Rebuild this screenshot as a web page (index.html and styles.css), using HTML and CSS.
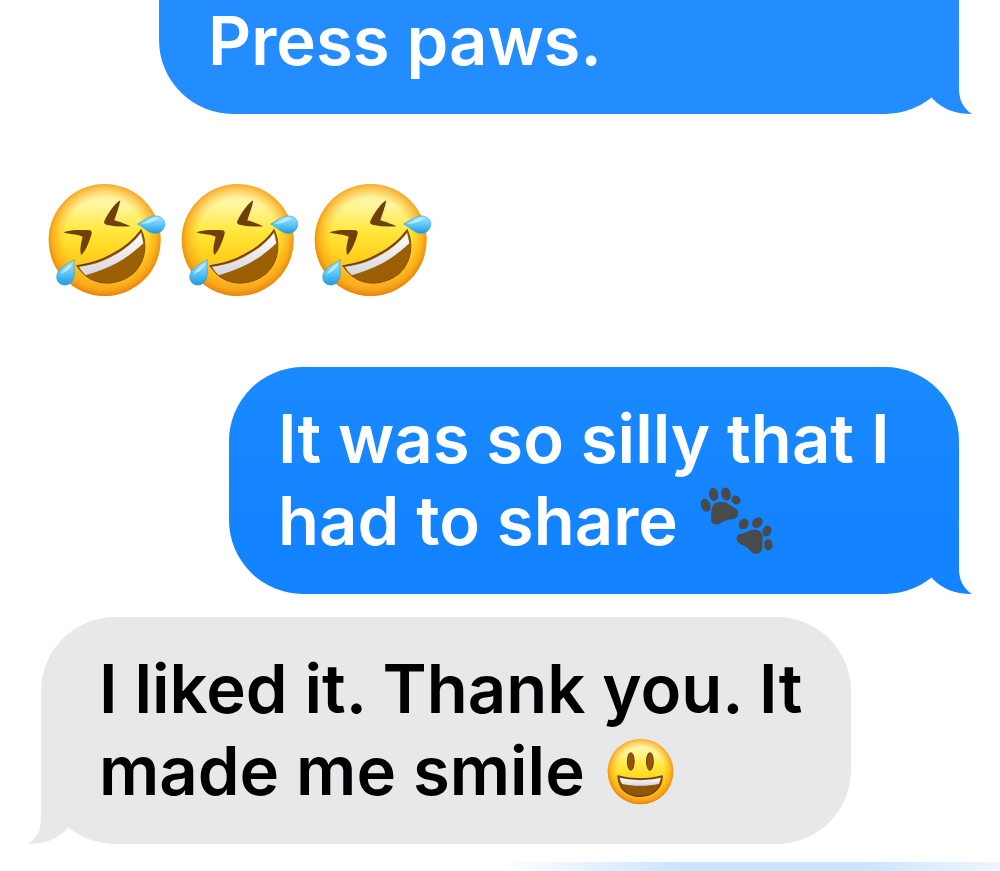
FILE: index.html
```html
<!DOCTYPE html>
<html lang="en">
<head>
  <meta charset="UTF-8">
  <meta name="viewport" content="width=device-width, initial-scale=1.0">
  <title>Messages</title>
  <link rel="stylesheet" href="styles.css">
</head>
<body>
  <!-- Shared drawings -->
  <svg class="defs" width="0" height="0" aria-hidden="true">
    <defs>
      <radialGradient id="face-edge" cx="0.5" cy="0.48" r="0.52">
        <stop offset="0.68" stop-color="#fbb01a" stop-opacity="0"/>
        <stop offset="0.88" stop-color="#f8a318" stop-opacity="0.7"/>
        <stop offset="1" stop-color="#e5820c"/>
      </radialGradient>
      <linearGradient id="face-fill" x1="0" y1="0" x2="0" y2="1">
        <stop offset="0" stop-color="#fff6b0"/>
        <stop offset="0.2" stop-color="#fff59a"/>
        <stop offset="0.42" stop-color="#ffe83c"/>
        <stop offset="0.65" stop-color="#ffd01c"/>
        <stop offset="1" stop-color="#fbae26"/>
      </linearGradient>
      <linearGradient id="teeth" x1="0" y1="0" x2="0" y2="1">
        <stop offset="0" stop-color="#ffffff"/>
        <stop offset="1" stop-color="#d6d5dc"/>
      </linearGradient>
      <linearGradient id="drop" x1="0" y1="0" x2="0" y2="1">
        <stop offset="0" stop-color="#a8e6ff"/>
        <stop offset="0.55" stop-color="#56c4fa"/>
        <stop offset="1" stop-color="#2499df"/>
      </linearGradient>
      <symbol id="laugh" viewBox="20 36 399 351">
        <circle cx="193" cy="210" r="168" fill="url(#face-fill)"/>
        <circle cx="193" cy="210" r="168" fill="url(#face-edge)"/>
        <path d="M240 91 C226 98 204 128 192 153 C190 158 192 162 198 164 Q233 172 270 169 C260 163 238 156 222 151 C229 130 237 110 240 91Z" fill="#70400a"/>
        <path d="M69 187 C88 179 123 179 148 181 C154 182 156 187 153 194 C147 215 138 239 123 255 C117 241 122 220 127 200 C107 192 85 193 69 187Z" fill="#70400a"/>
        <path d="M110 288 C154 281 186 270 215 253 C252 235 280 211 303 180 C322 220 317 276 277 312 C224 353 148 350 110 288Z" fill="#9d5f04"/>
        <path d="M116 290 C159 285 190 273 219 257 C253 239 281 216 302 188 L309 220 C282 246 256 264 228 280 C197 296 164 308 136 316 Q123 303 116 290Z" fill="url(#teeth)"/>
        <path d="M110 288 C154 281 186 270 215 253 C252 235 280 211 303 180" fill="none" stroke="#6e3907" stroke-width="4" stroke-linecap="round"/>
        <path d="M303 180 C322 220 317 276 277 312 C224 353 148 350 110 288" fill="none" stroke="#85490a" stroke-width="3" stroke-linecap="round"/>
        <path d="M292 162 C311 153 323 138 346 138 C362 138 373 149 373 162 C373 178 361 190 344 190 C324 189 310 171 292 162Z" fill="url(#drop)" stroke="#2b9bd2" stroke-width="2"/>
        <path d="M302 161 C322 155 335 141 354 145 C342 153 330 162 302 161Z" fill="#c8f2ff" opacity="0.8"/>
        <path d="M102 269 C84 281 61 289 52 309 C45 324 52 340 66 344 C80 348 93 341 99 326 C106 308 98 288 102 269Z" fill="url(#drop)" stroke="#2b9bd2" stroke-width="2"/>
        <path d="M96 280 C79 289 66 301 60 314 C75 306 91 299 96 280Z" fill="#c8f2ff" opacity="0.8"/>
      </symbol>
      <symbol id="smile" viewBox="24 26 200 200">
        <circle cx="124" cy="126" r="98" fill="url(#face-fill)"/>
        <circle cx="124" cy="126" r="98" fill="url(#face-edge)"/>
        <ellipse cx="95" cy="96" rx="10" ry="26" fill="#935506" stroke="#713d08" stroke-width="3"/>
        <ellipse cx="152" cy="96" rx="10" ry="26" fill="#935506" stroke="#713d08" stroke-width="3"/>
        <path d="M57 139 C98 151 149 151 189 139 C187 177 161 200 123 200 C84 200 59 178 57 139Z" fill="#925706"/>
        <path d="M62 145 C101 154 147 154 185 145 Q184 155 178 163 C144 170 102 170 69 163 Q63 155 62 145Z" fill="url(#teeth)"/>
        <path d="M57 139 C98 151 149 151 189 139 C187 177 161 200 123 200 C84 200 59 178 57 139Z" fill="none" stroke="#713d08" stroke-width="4" stroke-linejoin="round"/>
      </symbol>
      <symbol id="paws" viewBox="27 36 222 204">
        <g fill="#494a4c">
          <ellipse cx="44" cy="91" rx="14" ry="20" transform="rotate(-20 44 91)"/>
          <ellipse cx="68" cy="58" rx="14" ry="20" transform="rotate(-8 68 58)"/>
          <ellipse cx="105" cy="57" rx="14" ry="20" transform="rotate(-15 105 57)"/>
          <ellipse cx="135" cy="75" rx="13" ry="14" transform="rotate(-50 135 75)"/>
          <path d="M66 91 C75 77 99 77 112 87 C121 95 136 98 141 109 C146 122 136 133 122 133 C108 132 97 139 84 147 C70 152 58 142 60 127 C61 113 61 101 66 91Z"/>
          <ellipse cx="158" cy="147" rx="14" ry="17" transform="rotate(35 158 147)"/>
          <ellipse cx="199" cy="143" rx="14" ry="18" transform="rotate(45 199 143)"/>
          <ellipse cx="228" cy="168" rx="13" ry="17" transform="rotate(20 228 168)"/>
          <ellipse cx="232" cy="209" rx="13" ry="17"/>
          <path d="M147 177 C163 175 176 163 192 164 C211 165 217 179 215 194 C213 207 217 218 210 230 C202 239 187 238 179 229 C170 218 160 212 148 207 C132 199 133 179 147 177Z"/>
        </g>
      </symbol>
      <symbol id="tail" viewBox="0 0 60 70">
        <path d="M20 20 L47 0 L47 44 C47 56 51 64 60 70 C44 70 31 66 20 54 L8 44Z"/>
      </symbol>
    </defs>
  </svg>

  <main class="thread">
    <div class="bubble sent cut">
      <p>Press paws.</p>
      <svg class="tail" aria-hidden="true"><use href="#tail"/></svg>
    </div>

    <div class="reactions" role="img" aria-label="Rolling on the floor laughing">
      <svg class="laugh"><use href="#laugh"/></svg>
      <svg class="laugh"><use href="#laugh"/></svg>
      <svg class="laugh"><use href="#laugh"/></svg>
    </div>

    <div class="bubble sent">
      <p>It was so silly that I<br>had to share <svg class="emoji paws" role="img" aria-label="Paw prints"><use href="#paws"/></svg></p>
      <svg class="tail" aria-hidden="true"><use href="#tail"/></svg>
    </div>

    <div class="bubble received">
      <p>I liked it. Thank you. It<br>made me smile <svg class="emoji smile" role="img" aria-label="Smiling face"><use href="#smile"/></svg></p>
      <svg class="tail" aria-hidden="true"><use href="#tail"/></svg>
    </div>

    <div class="next-message"></div>
  </main>
</body>
</html>
```
FILE: styles.css
```css
body {
  margin: 0;
  background-color: #fff;
  font-family: Inter, "Liberation Sans", sans-serif;
}

.defs {
  position: absolute;
}

.thread {
  display: flex;
  flex-direction: column;
  min-height: 100vh;
  overflow: hidden;
}

.bubble {
  position: relative;
  box-sizing: border-box;
  padding: 31px 49px 32px;
  border-radius: 74px;
  font-size: 67px;
  font-weight: 600;
  line-height: 82px;
}

.bubble p {
  margin: 0;
  white-space: nowrap;
}

.sent {
  align-self: flex-end;
  width: 73%;
  margin-right: 41px;
  background: linear-gradient(#1a8aff, #1483ff 70%);
  color: #fff;
}

/* earlier message, scrolled partly out of view */
.cut {
  width: 80%;
  padding-top: 0;
  border-radius: 0 0 74px 74px;
  background: #238cff;
}

.received {
  align-self: flex-start;
  width: 81%;
  margin-top: 23px;
  margin-left: 41px;
  padding-left: 58px;
  background-color: #e8e8ea;
  color: #000;
}

.tail {
  position: absolute;
  right: -13px;
  bottom: 0;
  width: 60px;
  height: 70px;
  fill: #1483ff;
}

.cut .tail {
  fill: #238cff;
}

.received .tail {
  right: auto;
  left: -13px;
  fill: #e8e8ea;
  transform: scaleX(-1);
}

.reactions {
  display: flex;
  margin: 68px 47px;
}

.laugh {
  width: 133px;
  height: 117px;
}

.emoji {
  margin-left: 5px;
  vertical-align: -10px;
}

.paws {
  width: 74px;
  height: 68px;
}

.smile {
  width: 67px;
  height: 67px;
}

.next-message {
  flex: 1;
  min-height: 9px;
  margin-top: 18px;
  background: linear-gradient(to right, #fff 50%, #cce4ff 68%, #cce4ff 86%, #eef5fd);
}
```
